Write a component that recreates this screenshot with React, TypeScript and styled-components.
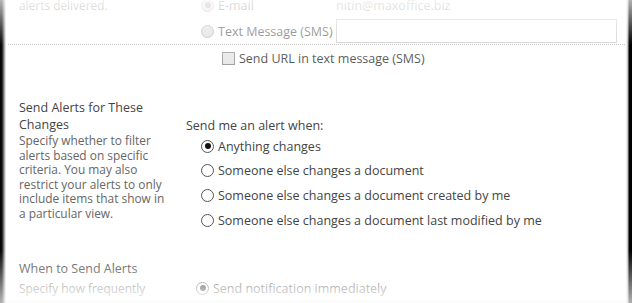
import React from "react";
import styled, { createGlobalStyle, css } from "styled-components";

const GlobalStyle = createGlobalStyle`
  html, body {
    margin: 0;
    padding: 0;
    background: #ffffff;
  }
  body {
    font-family: "Open Sans", "Noto Sans", "Liberation Sans", sans-serif;
  }
`;

const Frame = styled.div`
  position: relative;
  width: 632px;
  height: 303px;
  overflow: hidden;
  background: #ffffff;
  color: #444444;
  font-size: 13px;
`;

const Content = styled.div`
  margin-top: -8px;
  display: flex;
  flex-direction: column;
`;

const Section = styled.div<{ $top?: number }>`
  display: grid;
  grid-template-columns: 167px 1fr;
  padding-left: 19px;
  margin-top: ${(p) => p.$top ?? 0}px;
`;

const LeftCol = styled.div`
  display: flex;
  flex-direction: column;
`;

const RightCol = styled.div<{ $pad?: number; $indent?: number }>`
  display: flex;
  flex-direction: column;
  padding-top: ${(p) => p.$pad ?? 0}px;
  padding-left: ${(p) => p.$indent ?? 0}px;
`;

const Title = styled.div`
  font-size: 12.5px;
  line-height: 17px;
  color: #444444;
  width: 150px;
`;

const Description = styled.div<{ $h?: number }>`
  font-size: 11.9px;
  line-height: 14.5px;
  color: #666666;
  white-space: nowrap;
  ${(p) =>
    p.$h &&
    css`
      height: ${p.$h}px;
      display: flex;
      align-items: center;
    `}
`;

const Line = styled.span`
  display: block;
`;

const Prompt = styled.div`
  font-size: 12.5px;
  line-height: 17px;
  color: #444444;
`;

const OptionRow = styled.div<{ $h: number; $indent?: number }>`
  display: flex;
  align-items: center;
  height: ${(p) => p.$h}px;
  padding-left: ${(p) => p.$indent ?? 0}px;
`;

const Label = styled.label<{ $w?: number }>`
  display: flex;
  align-items: center;
  gap: 4px;
  font-size: 12.5px;
  color: #444444;
  white-space: nowrap;
  ${(p) =>
    p.$w &&
    css`
      width: ${p.$w}px;
    `}
`;

const Radio = styled.span<{ $checked?: boolean; $disabled?: boolean }>`
  position: relative;
  box-sizing: border-box;
  width: 13px;
  height: 13px;
  border-radius: 50%;
  border: 1px solid ${(p) => (p.$disabled ? "#a9a9a9" : "#555555")};
  background: ${(p) => (p.$disabled ? "#d9d9d9" : "#ffffff")};
  flex: none;
  &::after {
    content: "";
    display: ${(p) => (p.$checked ? "block" : "none")};
    position: absolute;
    left: 2.5px;
    top: 2.5px;
    width: 6px;
    height: 6px;
    border-radius: 50%;
    background: ${(p) => (p.$disabled ? "#777777" : "#111111")};
  }
`;

const Checkbox = styled.span`
  box-sizing: border-box;
  width: 13px;
  height: 13px;
  border: 1px solid #9a9a9a;
  background: #e6e6e6;
  flex: none;
`;

const Muted = styled.span`
  color: #777777;
  font-size: 12.5px;
`;

const TextInput = styled.div`
  box-sizing: border-box;
  width: 281px;
  height: 24px;
  border: 1px solid #c4c4c4;
  background: #ffffff;
`;

const Dotted = styled.div`
  margin: 0 7px 0 8px;
  border-top: 1px dotted #b0b0b0;
`;

const BottomRule = styled.div`
  margin-top: 2px;
  border-top: 1px solid #b8b8b8;
`;

const Fade = styled.div<{ $edge: "top" | "bottom" }>`
  position: absolute;
  left: 0;
  right: 0;
  pointer-events: none;
  ${(p) =>
    p.$edge === "top"
      ? css`
          top: 0;
          height: 70px;
          background: linear-gradient(
            to bottom,
            rgba(255, 255, 255, 0.88) 0%,
            rgba(255, 255, 255, 0) 100%
          );
        `
      : css`
          top: 254px;
          bottom: 0;
          background: linear-gradient(
            to bottom,
            rgba(255, 255, 255, 0) 0%,
            rgba(255, 255, 255, 0.94) 100%
          );
        `}
`;

const Edge = styled.div<{ $side: "left" | "right" }>`
  position: absolute;
  top: 0;
  bottom: 0;
  pointer-events: none;
  -webkit-mask-image: linear-gradient(
    to bottom,
    rgba(0, 0, 0, 0.3) 0px,
    #000 45px,
    #000 250px,
    rgba(0, 0, 0, 0.3) 303px
  );
  mask-image: linear-gradient(
    to bottom,
    rgba(0, 0, 0, 0.3) 0px,
    #000 45px,
    #000 250px,
    rgba(0, 0, 0, 0.3) 303px
  );
  ${(p) =>
    p.$side === "left"
      ? css`
          left: 0;
          width: 6px;
          background: linear-gradient(
            to right,
            #000 0px,
            #111 2px,
            rgba(0, 0, 0, 0.45) 4px,
            rgba(0, 0, 0, 0) 6px
          );
        `
      : css`
          right: 0;
          width: 6px;
          background: linear-gradient(
            to right,
            rgba(0, 0, 0, 0) 0px,
            rgba(0, 0, 0, 0.3) 2px,
            #000 3px,
            #000 6px
          );
        `}
`;

const changeOptions = [
  "Anything changes",
  "Someone else changes a document",
  "Someone else changes a document created by me",
  "Someone else changes a document last modified by me",
];

const filterHelp = [
  "Specify whether to filter",
  "alerts based on specific",
  "criteria. You may also",
  "restrict your alerts to only",
  "include items that show in",
  "a particular view.",
];

export default function App() {
  return (
    <>
      <GlobalStyle />
      <Frame>
        <Content>
          <Section>
            <LeftCol>
              <Description $h={26}>alerts delivered.</Description>
            </LeftCol>
            <RightCol $indent={15}>
              <OptionRow $h={26}>
                <Label $w={135}>
                  <Radio $checked $disabled />
                  E-mail
                </Label>
                <Muted>nitin@maxoffice.biz</Muted>
              </OptionRow>
              <OptionRow $h={26}>
                <Label $w={135}>
                  <Radio $disabled />
                  Text Message (SMS)
                </Label>
                <TextInput />
              </OptionRow>
            </RightCol>
          </Section>
          <Dotted />
          <Section>
            <LeftCol />
            <RightCol $indent={36}>
              <OptionRow $h={26}>
                <Label>
                  <Checkbox />
                  Send URL in text message (SMS)
                </Label>
              </OptionRow>
            </RightCol>
          </Section>

          <Section $top={28}>
            <LeftCol>
              <Title>Send Alerts for These Changes</Title>
              <Description>
                {filterHelp.map((line) => (
                  <Line key={line}>{line}</Line>
                ))}
              </Description>
            </LeftCol>
            <RightCol $pad={18}>
              <Prompt>Send me an alert when:</Prompt>
              {changeOptions.map((text, i) => (
                <OptionRow key={text} $h={24.6} $indent={15}>
                  <Label>
                    <Radio $checked={i === 0} />
                    {text}
                  </Label>
                </OptionRow>
              ))}
            </RightCol>
          </Section>

          <Section $top={28}>
            <LeftCol>
              <Title>When to Send Alerts</Title>
              <Description $h={22}>Specify how frequently</Description>
            </LeftCol>
            <RightCol $pad={17} $indent={10}>
              <OptionRow $h={22}>
                <Label>
                  <Radio $checked />
                  Send notification immediately
                </Label>
              </OptionRow>
            </RightCol>
          </Section>
          <BottomRule />
        </Content>
        <Fade $edge="top" />
        <Fade $edge="bottom" />
        <Edge $side="left" />
        <Edge $side="right" />
      </Frame>
    </>
  );
}
